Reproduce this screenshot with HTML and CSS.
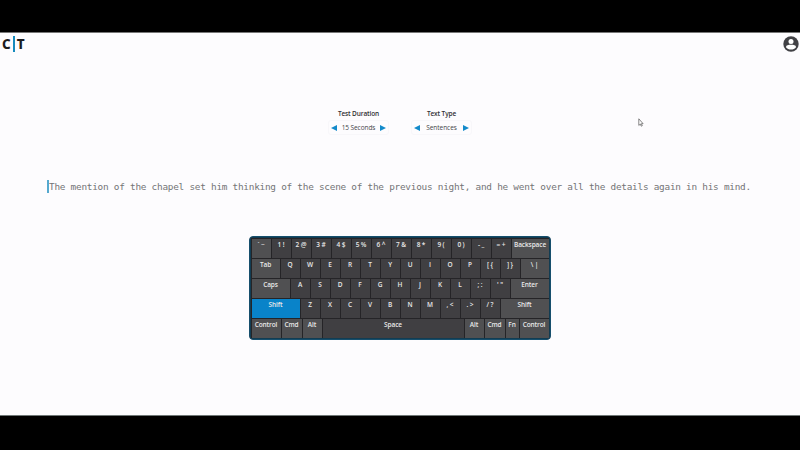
FILE: index.html
```html
<!DOCTYPE html>
<html lang="en">
<head>
<meta charset="utf-8">
<title>Typing Test</title>
<link rel="stylesheet" href="styles.css">
</head>
<body>
<div class="app">
  <header class="header">
    <div class="logo"><span>C</span><i class="logo-bar"></i><span>T</span></div>
    <svg class="avatar" viewBox="0 0 16 16"><circle cx="8" cy="8" r="7.7" fill="#414145"/><circle cx="8" cy="5.4" r="2.5" fill="#fff"/><path d="M3 11.2C3.1 9 5.4 8.8 8 8.8s4.900.2 5 2.400C11.900 12.700 10.100 13.500 8 13.500S4.100 12.700 3 11.200Z" fill="#fff"/></svg>
  </header>
  <section class="options">
    <div class="option">
      <div class="title">Test Duration</div>
      <div class="picker"><i class="arrow left"></i><span>15 Seconds</span><i class="arrow right"></i></div>
    </div>
    <div class="option">
      <div class="title">Text Type</div>
      <div class="picker"><i class="arrow left"></i><span class="sentences">Sentences</span><i class="arrow right"></i></div>
    </div>
  </section>
  <main>
    <p class="prompt"><i class="caret"></i>The mention of the chapel set him thinking of the scene of the previous night, and he went over all the details again in his mind.</p>
    <div class="keyboard">
      <div class="row"><b class="key mod">` ~</b><b class="key">1 !</b><b class="key">2 @</b><b class="key">3 #</b><b class="key">4 $</b><b class="key">5 %</b><b class="key">6 ^</b><b class="key">7 &amp;</b><b class="key">8 *</b><b class="key">9 (</b><b class="key">0 )</b><b class="key">- _</b><b class="key">= +</b><b class="key mod w38">Backspace</b></div>
      <div class="row"><b class="key mod w29">Tab</b><b class="key">Q</b><b class="key">W</b><b class="key">E</b><b class="key">R</b><b class="key">T</b><b class="key">Y</b><b class="key">U</b><b class="key">I</b><b class="key">O</b><b class="key">P</b><b class="key">[ {</b><b class="key">] }</b><b class="key mod w29">\ |</b></div>
      <div class="row"><b class="key mod w39">Caps</b><b class="key">A</b><b class="key">S</b><b class="key">D</b><b class="key">F</b><b class="key">G</b><b class="key">H</b><b class="key">J</b><b class="key">K</b><b class="key">L</b><b class="key">; :</b><b class="key">' "</b><b class="key mod w39">Enter</b></div>
      <div class="row"><b class="key active w49">Shift</b><b class="key">Z</b><b class="key">X</b><b class="key">C</b><b class="key">V</b><b class="key">B</b><b class="key">N</b><b class="key">M</b><b class="key">, &lt;</b><b class="key">. &gt;</b><b class="key">/ ?</b><b class="key mod w49">Shift</b></div>
      <div class="row"><b class="key mod w30">Control</b><b class="key mod w21">Cmd</b><b class="key mod">Alt</b><b class="key space">Space</b><b class="key mod">Alt</b><b class="key mod w21">Cmd</b><b class="key mod w14">Fn</b><b class="key mod w30">Control</b></div>
    </div>
  </main>
  <svg class="pointer" viewBox="0 0 6 9"><path d="M.8.8v6.600l1.500-1.300 1 2.100 1-.5-1-2h1.800Z" fill="#fff" stroke="#555" stroke-width=".7"/></svg>
</div>
</body>
</html>
```
FILE: styles.css
```css
* { box-sizing: border-box; }
body {
  margin: 0;
  height: 450px;
  padding: 32px 0 34px;
  background: #000;
  overflow: hidden;
  font-family: "Open Sans", "Noto Sans", sans-serif;
}
.app {
  position: relative;
  height: 384px;
  background: #fdfcfe;
  border-top: 1px solid #777;
  border-bottom: 1px solid #6f7776;
}
.header {
  height: 21px;
  padding: 0 1px 0 2px;
  display: flex;
  justify-content: space-between;
  align-items: center;
}
.logo {
  display: flex;
  align-items: center;
  font-family: "Noto Sans", sans-serif;
  font-size: 13.5px;
  line-height: 18px;
  font-weight: 800;
  color: #1c1c1e;
}
.logo-bar { width: 2px; height: 16px; margin: 0 2px; background: #168bbd; }
.avatar { width: 16px; height: 16px; }
.options {
  display: flex;
  justify-content: center;
  gap: 22px;
  padding-top: 54px;
}
.option { width: 61px; }
.title {
  height: 11px;
  line-height: 11px;
  font-size: 6.5px;
  letter-spacing: -.12px;
  font-weight: 600;
  text-align: center;
  color: #303033;
  white-space: nowrap;
}
.picker {
  display: flex;
  align-items: center;
  justify-content: space-between;
  height: 15px;
  margin-top: 1px;
  padding: 0 2px;
  border: 1px solid #f8f7fa;
  border-radius: 3px;
  font-size: 6.5px;
  letter-spacing: -.08px;
  color: #464649;
  white-space: nowrap;
}
.sentences { letter-spacing: -.04px; }
.arrow { border: 3px solid transparent; }
.left { border-right: 6px solid #138aca; border-left: 0; }
.right { border-left: 6px solid #138aca; border-right: 0; }
.prompt {
  position: relative;
  margin: 43px 0 0 49px;
  height: 18px;
  line-height: 18px;
  font-family: "DejaVu Sans Mono", monospace;
  font-size: 9.4px;
  letter-spacing: -.245px;
  white-space: nowrap;
  color: #747476;
}
.caret {
  position: absolute;
  left: -2px;
  top: 2px;
  width: 2px;
  height: 13px;
  background: #55a9cf;
}
.keyboard {
  width: 302px;
  height: 104px;
  margin: 40px auto 0 249px;
  padding: 1px 0 0 1px;
  border: 1px solid #164f6d;
  border-radius: 4px;
  background: #252427;
  box-shadow: inset 0 0 0 1px #123c52;
}
.row { display: flex; width: 298px; height: 20px; }
.key {
  flex: none;
  width: 20px;
  height: 20px;
  padding-right: 1px;
  border: solid #252427;
  border-width: 1px 0 0 1px;
  background: #403f42;
  color: #e8e8e8;
  font-size: 6.5px;
  letter-spacing: -.1px;
  font-weight: 600;
  line-height: 12px;
  text-align: center;
  white-space: nowrap;
}
.mod { background: #505052; }
.active { background: #0983c9; }
.w14 { width: 14px; }
.w21 { width: 21px; }
.w29 { width: 29px; }
.w30 { width: 30px; }
.w38 { width: 38px; }
.w39 { width: 39px; }
.w49 { width: 49px; }
.space { flex: 1; background: #403f42; }
.pointer {
  position: absolute;
  left: 638px;
  top: 85px;
  width: 6px;
  height: 9px;
}
```
